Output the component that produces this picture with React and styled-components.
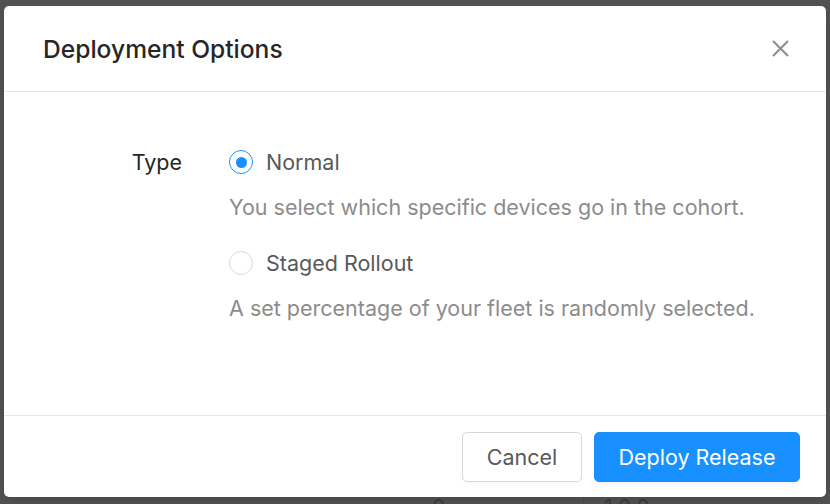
import React, { useState } from "react";
import styled, { createGlobalStyle } from "styled-components";

const GlobalStyle = createGlobalStyle`
  html, body {
    margin: 0;
    padding: 0;
    background: #535353;
    font-family: Inter, "Noto Sans", "Liberation Sans", sans-serif;
    -webkit-font-smoothing: antialiased;
  }
`;

const Page = styled.div`
  position: relative;
  width: 830px;
  height: 504px;
  overflow: hidden;
  background: #535353;
`;

// what is left of the page under the mask
const UnderRow = styled.div`
  display: flex;
  align-items: flex-start;
  height: 504px;
  padding-top: 496px;
  box-sizing: border-box;
  color: #3c3c3c;
  font-size: 21px;
  line-height: 24px;
`;

const UnderCell = styled.div`
  width: ${props => props.width}px;
  padding-left: ${props => props.pad || 0}px;
  box-sizing: border-box;
  border-left: ${props => (props.divider ? "1px solid #4a4a4a" : "none")};
  height: 24px;
`;

const Modal = styled.div`
  position: absolute;
  top: 6px;
  left: 4px;
  width: 822px;
  height: 491px;
  background: #fff;
  border-radius: 5px;
  display: flex;
  flex-direction: column;
  box-shadow: 0 4px 12px rgba(0, 0, 0, 0.15);
`;

const Header = styled.div`
  height: 85px;
  display: flex;
  align-items: center;
  justify-content: space-between;
  padding: 0 36px 0 39px;
  border-bottom: 1px solid #e8e8e8;
`;

const Title = styled.h1`
  margin: 0;
  font-size: 24.6px;
  font-weight: 500;
  color: #262626;
  line-height: 32px;
`;

const CloseButton = styled.button`
  width: 19px;
  height: 19px;
  padding: 0;
  border: none;
  background: none;
  cursor: pointer;
  display: flex;
  align-items: center;
  justify-content: center;
`;

const Body = styled.div`
  flex: 1;
  padding-top: 54px;
`;

const FormRow = styled.div`
  display: grid;
  grid-template-columns: 178px 1fr;
  column-gap: 47px;
`;

const Label = styled.div`
  text-align: right;
  font-size: 21.5px;
  line-height: 32px;
  color: #262626;
`;

const Options = styled.div`
  display: flex;
  flex-direction: column;
`;

const Option = styled.label`
  display: flex;
  align-items: center;
  gap: 13px;
  height: 32px;
  margin-top: ${props => (props.first ? 0 : 25)}px;
  font-size: 21.5px;
  color: #595959;
  cursor: pointer;
`;

const RadioCircle = styled.span`
  width: 24px;
  height: 24px;
  box-sizing: border-box;
  border-radius: 50%;
  border: 1.5px solid ${props => (props.checked ? "#1890ff" : "#d9d9d9")};
  display: flex;
  align-items: center;
  justify-content: center;
  flex-shrink: 0;
  background: #fff;

  &::after {
    content: "";
    width: 11px;
    height: 11px;
    border-radius: 50%;
    background: #1890ff;
    opacity: ${props => (props.checked ? 1 : 0)};
  }
`;

const Hint = styled.div`
  margin-top: 14px;
  font-size: 21.5px;
  line-height: 30px;
  color: #8c8c8c;
`;

const Footer = styled.div`
  display: flex;
  justify-content: flex-end;
  gap: 12px;
  padding: 16px 26px 15px;
  border-top: 1px solid #e8e8e8;
`;

const Button = styled.button`
  height: 50px;
  padding: 0 20px;
  min-width: ${props => (props.primary ? 206 : 120)}px;
  border-radius: 5px;
  font-family: inherit;
  font-size: 21.5px;
  cursor: pointer;
  border: 1px solid ${props => (props.primary ? "#1890ff" : "#d9d9d9")};
  background: ${props => (props.primary ? "#1890ff" : "#fff")};
  color: ${props => (props.primary ? "#fff" : "#595959")};
  box-shadow: ${props =>
    props.primary ? "0 2px 0 rgba(0, 0, 0, 0.045)" : "0 2px 0 rgba(0, 0, 0, 0.015)"};
`;

const options = [
  {
    key: "normal",
    label: "Normal",
    hint: "You select which specific devices go in the cohort."
  },
  {
    key: "staged",
    label: "Staged Rollout",
    hint: "A set percentage of your fleet is randomly selected."
  }
];

export default function App() {
  const [type, setType] = useState("normal");

  return (
    <Page>
      <GlobalStyle />
      <UnderRow>
        <UnderCell width={432} />
        <UnderCell width={151} pad={0}>0</UnderCell>
        <UnderCell width={247} pad={20} divider>1.0.2</UnderCell>
      </UnderRow>
      <Modal>
        <Header>
          <Title>Deployment Options</Title>
          <CloseButton aria-label="Close">
            <svg width="19" height="19" viewBox="0 0 19 19">
              <path
                d="M2 2 L17 17 M17 2 L2 17"
                stroke="#8c8c8c"
                strokeWidth="2"
                strokeLinecap="butt"
                fill="none"
              />
            </svg>
          </CloseButton>
        </Header>
        <Body>
          <FormRow>
            <Label>Type</Label>
            <Options>
              {options.map((opt, i) => (
                <div key={opt.key}>
                  <Option first={i === 0} onClick={() => setType(opt.key)}>
                    <RadioCircle checked={type === opt.key} />
                    {opt.label}
                  </Option>
                  <Hint>{opt.hint}</Hint>
                </div>
              ))}
            </Options>
          </FormRow>
        </Body>
        <Footer>
          <Button>Cancel</Button>
          <Button primary>Deploy Release</Button>
        </Footer>
      </Modal>
    </Page>
  );
}
